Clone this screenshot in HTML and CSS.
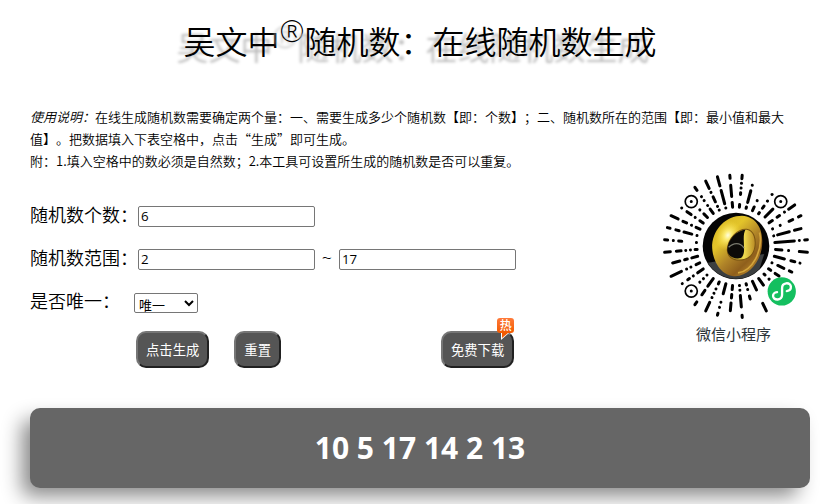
FILE: index.html
```html
<!DOCTYPE html>
<html lang="zh-CN">
<head>
  <meta charset="UTF-8">
  <meta name="viewport" content="width=device-width, initial-scale=1.0">
  <title>在线随机数生成</title>
  <link rel="stylesheet" href="styles.css">
</head>
<body>
  <h1>吴文中<sup>®</sup>随机数：在线随机数生成</h1>

  <!-- 使用说明 -->
  <div class="intro">
    <p><em>使用说明：</em>在线生成随机数需要确定两个量：一、需要生成多少个随机数【即：个数】；二、随机数所在的范围【即：最小值和最大值】。把数据填入下表空格中，点击“生成”即可生成。</p>
    <p>附：1.填入空格中的数必须是自然数；2.本工具可设置所生成的随机数是否可以重复。</p>
  </div>

  <div class="main">
    <form id="form">
      <div class="row">
        <label for="count">随机数个数：</label>
        <input type="text" id="count" value="6">
      </div>
      <div class="row">
        <label for="min">随机数范围：</label>
        <input type="text" id="min" value="2">
        <span class="tilde">~</span>
        <input type="text" id="max" value="17" aria-label="最大值">
      </div>
      <div class="row">
        <label for="unique" class="short">是否唯一：</label>
        <select id="unique">
          <option>唯一</option>
          <option>不唯一</option>
        </select>
      </div>
      <div class="buttons">
        <button type="button">点击生成</button>
        <button type="reset">重置</button>
        <div class="download">
          <button type="button">免费下载</button>
          <span class="hot">热</span>
        </div>
      </div>
    </form>

    <!-- 小程序码 -->
    <div class="qrcode">
      <svg viewBox="-220 -220 440 440" role="img" aria-label="微信小程序">
        <defs>
          <linearGradient id="gold" x1="0" y1="0" x2="0.8" y2="1">
            <stop offset="0" stop-color="#d2b322"/>
            <stop offset="0.35" stop-color="#e3c42a"/>
            <stop offset="0.6" stop-color="#b08428"/>
            <stop offset="0.8" stop-color="#8f5f1c"/>
            <stop offset="1" stop-color="#c2902c"/>
          </linearGradient>
          <linearGradient id="inner" x1="0" y1="0" x2="1" y2="0">
            <stop offset="0" stop-color="#8a6a10"/>
            <stop offset="0.6" stop-color="#f0dc50"/>
            <stop offset="1" stop-color="#b98a24"/>
          </linearGradient>
          <radialGradient id="shine">
            <stop offset="0" stop-color="#fffde0"/>
            <stop offset="0.3" stop-color="#fff07a" stop-opacity="0.9"/>
            <stop offset="1" stop-color="#f5d93a" stop-opacity="0"/>
          </radialGradient>
        </defs>
        <g class="rays">
          <path transform="rotate(5)" d="M0-211v10M0-187v0M0-173v0M0-159v5M0-124v8"/>
          <path transform="rotate(15)" d="M0-187v0M0-170v36M0-120v4"/>
          <path transform="rotate(25)" d="M0-149v0M0-128v12"/>
          <path transform="rotate(35)" d="M0-187v0M0-163v0M0-145v8M0-121v4"/>
          <path transform="rotate(45)" d="M0-155v33"/>
          <path transform="rotate(55)" d="M0-213v22M0-176v0M0-158v9M0-132v12"/>
          <path transform="rotate(65)" d="M0-213v8M0-186v12M0-145v0M0-120v0"/>
          <path transform="rotate(75)" d="M0-200v20M0-164v36M0-116v0"/>
          <path transform="rotate(85)" d="M0-213v8M0-189v0M0-174v58"/>
          <path transform="rotate(95)" d="M0-213v24M0-157v0M0-137v19"/>
          <path transform="rotate(105)" d="M0-197v0M0-181v12M0-149v31"/>
          <path transform="rotate(115)" d="M0-183v8M0-157v20M0-118v0"/>
          <path transform="rotate(125)" d="M0-156v14M0-126v8"/>
          <path transform="rotate(135)" d="M0-139v0M0-122v4"/>
          <path transform="rotate(145)" d="M0-142v24"/>
          <path transform="rotate(155)" d="M0-213v25M0-144v28"/>
          <path transform="rotate(165)" d="M0-163v9M0-134v0M0-120v4"/>
          <path transform="rotate(175)" d="M0-213v6M0-182v34M0-132v0M0-118v0"/>
          <path transform="rotate(185)" d="M0-193v23M0-155v10M0-130v12"/>
          <path transform="rotate(195)" d="M0-213v6M0-189v0M0-173v0M0-147v31"/>
          <path transform="rotate(205)" d="M0-213v28M0-169v0M0-155v0M0-141v0M0-124v6"/>
          <path transform="rotate(215)" d="M0-213v10M0-177v16M0-146v28"/>
          <path transform="rotate(225)" d="M0-152v0M0-137v0M0-122v0"/>
          <path transform="rotate(235)" d="M0-195v0M0-175v6M0-155v0M0-139v20"/>
          <path transform="rotate(245)" d="M0-213v34M0-162v0M0-148v0M0-131v12"/>
          <path transform="rotate(255)" d="M0-195v22M0-158v8M0-136v18"/>
          <path transform="rotate(265)" d="M0-213v17M0-178v14M0-150v0M0-136v0M0-122v6"/>
          <path transform="rotate(275)" d="M0-213v9M0-187v0M0-171v9M0-118v0"/>
          <path transform="rotate(285)" d="M0-211v8M0-185v10M0-160v24M0-120v0"/>
          <path transform="rotate(295)" d="M0-213v23M0-174v12M0-146v0M0-131v13"/>
          <path transform="rotate(305)" d="M0-197v0M0-178v15M0-148v0M0-131v12"/>
          <path transform="rotate(315)" d="M0-152v0M0-135v15"/>
          <path transform="rotate(325)" d="M0-213v11M0-179v0M0-165v0M0-147v0M0-134v16"/>
          <path transform="rotate(335)" d="M0-213v24M0-176v0M0-161v16M0-130v0M0-118v0"/>
          <path transform="rotate(345)" d="M0-213v28M0-171v41M0-117v0"/>
          <path transform="rotate(355)" d="M0-211v9M0-181v33M0-130v14"/>
        </g>
        <g class="finder">
          <circle cx="-133" cy="-132" r="18"/>
          <circle cx="133" cy="-132" r="18"/>
          <circle cx="-133" cy="134" r="18"/>
        </g>
        <path class="rays" d="M-133-132v0M133-132v0M-133 134v0"/>
        <circle r="99" fill="#050505"/>
        <path d="M-84 50A98 98 0 0 0 70 68L84 24Z" fill="#3c3f40"/>
        <path d="M-71-4C-66-52-30-90 18-90C58-88 78-54 78-16C80 36 44 88-2 90C-44 90-72 44-71-4Z" fill="url(#gold)"/>
        <ellipse cx="-24" cy="-32" rx="36" ry="46" transform="rotate(25 -24 -32)" fill="url(#shine)"/>
        <path d="M-26 12C-24-24 6-52 32-50C54-46 60-20 56 4C52 28 34 42 10 42C-12 42-26 30-26 12Z" fill="url(#inner)" stroke="#7a5512" stroke-width="3"/>
        <path d="M-26 12C-24-20 2-46 28-48C20-34 24-12 24 12C24 24 20 32 14 36C-4 40-24 32-26 12Z" fill="#0c0b08"/>
        <path d="M-22 4C-8-10 12-12 24 6" fill="none" stroke="#77786c" stroke-width="4"/>
        <path d="M70-40C82 14 48 74 6 80" fill="none" stroke="#d5a63c" stroke-width="5"/>
        <circle cx="136" cy="135" r="42" fill="#14bf5f"/>
        <path class="logo" d="M122 137C106 138 106 160 124 159C132 158 137 153 137 145V125C137 117 142 112 149 111C167 109 168 132 151 134"/>
      </svg>
      <span>微信小程序</span>
    </div>
  </div>

  <div class="result">10 5 17 14 2 13</div>
</body>
</html>
```
FILE: styles.css
```css
* { margin: 0; padding: 0; box-sizing: border-box; }

body {
  padding: 10px 28px 16px 30px;
  font-family: "Noto Sans CJK SC", sans-serif;
  font-weight: 350;
  text-spacing-trim: space-all;
  background-color: #fff;
  color: #000;
}

h1 {
  height: 96px;
  font-size: 32px;
  font-weight: 350;
  line-height: 60px;
  text-align: center;
  text-shadow: -7px 6px 3px #bbb;
}

h1 sup {
  font-family: "Open Sans", sans-serif;
  font-size: 30px;
  line-height: 0;
}

.intro {
  font-size: 13px;
  line-height: 22px;
}

.main {
  display: flex;
  justify-content: space-between;
  align-items: flex-start;
}

form {
  padding-top: 23px;
}

.row {
  display: flex;
  align-items: center;
  height: 43px;
}

.row label {
  width: 108px;
  padding-bottom: 5px;
  font-size: 18px;
  white-space: nowrap;
}

.row label.short {
  width: 104px;
}

.row input {
  width: 177px;
  height: 21px;
  padding: 0 2px 1px;
  border: 1px solid #767676;
  border-radius: 2px;
  font-family: "Open Sans", sans-serif;
}

.tilde {
  width: 24px;
  padding-bottom: 5px;
  font-family: "Open Sans", sans-serif;
  font-size: 18px;
  text-align: center;
}

select {
  width: 64px;
  height: 20px;
  border: 1px solid #767676;
  border-radius: 2px;
  background-color: #fff;
  font-family: inherit;
  font-size: 13px;
  line-height: 16px;
}

.buttons {
  display: flex;
  gap: 25px;
  padding: 7px 0 0 106px;
}

button {
  height: 37px;
  padding: 0 8px;
  border: 2px outset #767676;
  border-radius: 10px;
  background-color: #555;
  color: #fff;
  font-family: inherit;
  cursor: pointer;
}

.download {
  position: relative;
  margin-left: 135px;
}

.hot {
  position: absolute;
  top: -13px;
  right: 0;
  width: 17px;
  height: 15px;
  border-radius: 3px;
  background: linear-gradient(#ff7a3a, #f25a00);
  color: #fff;
  font-size: 12px;
  font-weight: 500;
  line-height: 14px;
  text-align: center;
}

.hot::before,
.hot::after {
  content: "";
  position: absolute;
  left: 5px;
  top: 15px;
  border-top: 5px solid #f25a00;
  border-right: 6px solid transparent;
}

.hot::before {
  left: 4px;
  border-top: 7px solid #fff;
  border-right: 8px solid transparent;
}

.qrcode {
  display: flex;
  flex-direction: column;
  align-items: center;
  color: #2b3338;
  font-size: 15px;
  line-height: 28px;
}

.qrcode svg {
  width: 148px;
  height: 148px;
}

.qrcode span {
  padding-right: 5px;
  font-weight: 400;
}

.rays {
  fill: none;
  stroke: #000;
  stroke-width: 9;
  stroke-linecap: round;
}

.finder {
  fill: #fff;
  stroke: #000;
  stroke-width: 5;
}

.logo {
  fill: none;
  stroke: #fff;
  stroke-width: 7;
  stroke-linecap: round;
}

.result {
  margin-top: 40px;
  padding: 10px;
  border-radius: 10px;
  background-color: #666;
  box-shadow: -10px 10px 20px -2px #888;
  color: #fff;
  font-family: "Open Sans", sans-serif;
  font-size: 30px;
  font-weight: bold;
  line-height: 60px;
  text-align: center;
}
```
